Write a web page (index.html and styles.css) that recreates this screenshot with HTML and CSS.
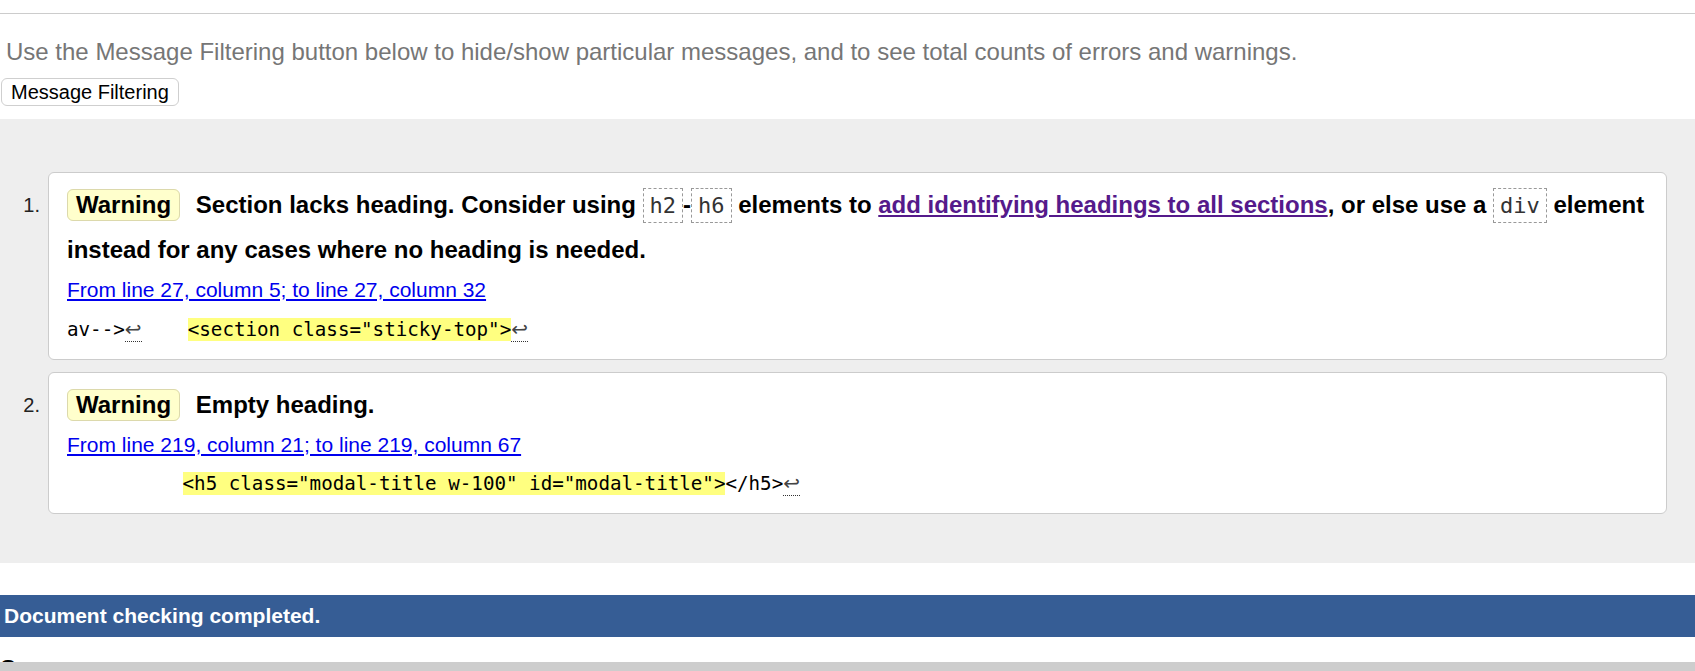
FILE: index.html
```html
<!DOCTYPE html>
<html lang="en">
<head>
<meta charset="utf-8">
<title>Validation results</title>
<link rel="stylesheet" href="styles.css">
</head>
<body>
<div class="rule"></div>
<p class="intro">Use the Message Filtering button below to hide/show particular messages, and to see total counts of errors and warnings.</p>
<button class="filter" type="button">Message Filtering</button>
<section class="results">
  <ol class="msgs">
    <li class="item">
      <span class="num">1.</span>
      <div class="card">
        <p class="message"><strong class="badge">Warning</strong> <span>Section lacks heading. Consider using <code class="tag">h2</code>-<code class="tag">h6</code> elements to <a class="visited" href="#">add identifying headings to all sections</a>, or else use a <code class="tag">div</code> element instead for any cases where no heading is needed.</span></p>
        <p class="location"><a href="#">From line 27, column 5; to line 27, column 32</a></p>
        <p class="extract"><code>av--&gt;<span class="lf">↩</span>    <mark>&lt;section class="sticky-top"&gt;</mark><span class="lf">↩</span></code></p>
      </div>
    </li>
    <li class="item">
      <span class="num">2.</span>
      <div class="card">
        <p class="message"><strong class="badge">Warning</strong> <span>Empty heading.</span></p>
        <p class="location"><a href="#">From line 219, column 21; to line 219, column 67</a></p>
        <p class="extract"><code>          <mark>&lt;h5 class="modal-title w-100" id="modal-title"&gt;</mark>&lt;/h5&gt;<span class="lf">↩</span></code></p>
      </div>
    </li>
  </ol>
</section>
<p class="done">Document checking completed.</p>
<h2 class="source">Source</h2>
<div class="hbar"></div>
</body>
</html>
```

FILE: styles.css
```css
html {
  overflow: hidden;
}

body {
  margin: 0;
  font-family: "Liberation Sans", Arial, sans-serif;
  color: #000;
  background: #fff;
}

.rule {
  margin-top: 13px;
  border-top: 1px solid #cccccc;
  height: 0;
}

.intro {
  margin: 24px 0 0 6px;
  font-size: 24px;
  line-height: normal;
  color: #767676;
}

.filter {
  display: block;
  margin: 12px 0 0 1px;
  font-family: "Liberation Sans", Arial, sans-serif;
  font-size: 20px;
  line-height: 22px;
  padding: 2px 9px 2px 9px;
  border: 1px solid #cfcfcf;
  border-radius: 6px;
  background: #fff;
  color: #000;
}

.results {
  margin-top: 13px;
  background: #eeeeee;
  padding: 53px 28px 49px 0;
}

.msgs {
  list-style: none;
  margin: 0;
  padding: 0;
  display: flex;
  flex-direction: column;
  gap: 12px;
}

.item {
  display: flex;
  align-items: flex-start;
}

.num {
  flex: 0 0 48px;
  box-sizing: border-box;
  padding: 11px 8px 0 0;
  text-align: right;
  font-size: 20px;
  line-height: 44px;
  color: #222;
}

.card {
  flex: 1;
  background: #fff;
  border: 1px solid #cccccc;
  border-radius: 6px;
  padding: 10px 10px 17px 18px;
}

.message {
  margin: 0;
  font-size: 24px;
  font-weight: bold;
  line-height: 44px;
}

.badge {
  background: #ffffcc;
  border: 1px solid #dcd9ac;
  border-radius: 6px;
  padding: 1px 8px 2px;
  margin-right: 9px;
}

.tag {
  font-family: "DejaVu Sans Mono", "Liberation Mono", monospace;
  font-size: 22px;
  font-weight: normal;
  line-height: 44px;
  color: #333;
  border: 1px dashed #999;
  padding: 4px 6px;
}

.visited {
  color: #551a8b;
}

.location {
  margin: 6px 0 0;
  font-size: 21px;
  line-height: 24px;
}

.location a {
  color: #0000ee;
}

.extract {
  margin: 14.5px 0 0;
  font-family: "DejaVu Sans Mono", "Liberation Mono", monospace;
  font-size: 19.2px;
  line-height: 24px;
  white-space: pre;
}

.extract code {
  font-family: inherit;
}

.extract mark {
  background: #ffff80;
  color: #000;
}

.lf {
  font-family: "DejaVu Sans", sans-serif;
  font-size: 20px;
  color: #444;
  border-bottom: 1px dotted #333;
}

.done {
  margin: 32px 0 0;
  background: #365d95;
  color: #fff;
  font-size: 21px;
  font-weight: bold;
  line-height: 42px;
  padding-left: 4px;
}

.source {
  margin: 18px 0 0;
  font-size: 24px;
}

.hbar {
  position: fixed;
  left: 0;
  right: 0;
  bottom: 0;
  height: 9px;
  background: #cdcdcd;
}
```
